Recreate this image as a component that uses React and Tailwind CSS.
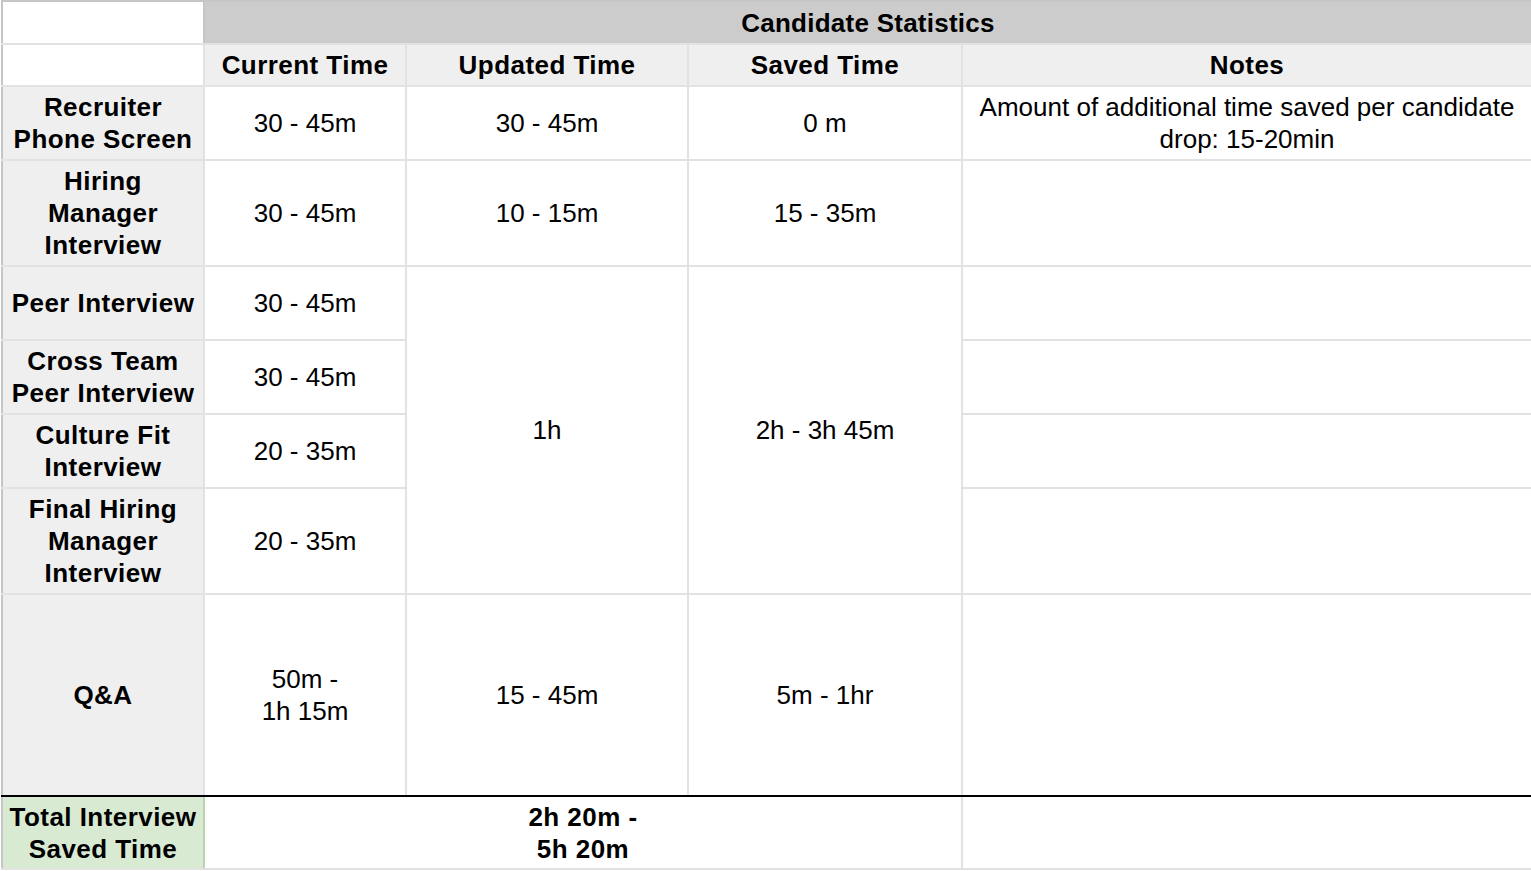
import React from "react";

const rows = [
  { label: ["Recruiter", "Phone Screen"], current: ["30 - 45m"], h: "h-[74px]" },
  { label: ["Hiring", "Manager", "Interview"], current: ["30 - 45m"], h: "h-[106px]" },
  { label: ["Peer Interview"], current: ["30 - 45m"], h: "h-[74px]" },
  { label: ["Cross Team", "Peer Interview"], current: ["30 - 45m"], h: "h-[74px]" },
  { label: ["Culture Fit", "Interview"], current: ["20 - 35m"], h: "h-[74px]" },
  { label: ["Final Hiring", "Manager", "Interview"], current: ["20 - 35m"], h: "h-[106px]" },
];

const cell = "border-2 border-[#e2e2e2] text-center align-middle p-0";
const bold = "font-bold tracking-[0.45px]";
const label = `border-2 border-[#e2e2e2] border-l-[#c6c6c6] bg-[#efefef] text-center align-middle p-0 ${bold}`;

function Lines({ lines }) {
  return lines.map((l, i) => <div key={i}>{l}</div>);
}

export default function App() {
  return (
    <div className="w-[1531px] h-[871px] bg-white overflow-hidden font-['Liberation_Sans',Arial,sans-serif] text-[26px] leading-[32px] text-black">
      <table className="table-fixed border-collapse w-[1530px] ml-px">
        <colgroup>
          <col className="w-[202px]" />
          <col className="w-[202px]" />
          <col className="w-[282px]" />
          <col className="w-[274px]" />
          <col className="w-[570px]" />
        </colgroup>
        <tbody>
          <tr className="h-[43px]">
            <td className="border-2 border-[#e2e2e2] border-t-[#c6c6c6] border-l-[#c6c6c6] border-r-[#c6c6c6] bg-white p-0"></td>
            <td colSpan={4} className={`border-2 border-[#e2e2e2] border-t-[#c6c6c6] border-r-[#c6c6c6] bg-[#cccccc] text-center p-0 font-bold tracking-[0.25px]`}>
              Candidate Statistics
            </td>
          </tr>
          <tr className="h-[42px]">
            <td className="border-2 border-[#e2e2e2] border-l-[#c6c6c6] bg-white p-0"></td>
            <td className={`${cell} bg-[#efefef] ${bold}`}>Current Time</td>
            <td className={`${cell} bg-[#efefef] ${bold}`}>Updated Time</td>
            <td className={`${cell} bg-[#efefef] ${bold}`}>Saved Time</td>
            <td className={`${cell} bg-[#efefef] ${bold}`}>Notes</td>
          </tr>
          {rows.map((r, i) => (
            <tr key={i} className={r.h}>
              <td className={label}>
                <Lines lines={r.label} />
              </td>
              <td className={cell}>
                <Lines lines={r.current} />
              </td>
              {i === 0 && (
                <>
                  <td className={cell}>30 - 45m</td>
                  <td className={cell}>0 m</td>
                  <td className={cell}>
                    <div>Amount of additional time saved per candidate</div>
                    <div>drop: 15-20min</div>
                  </td>
                </>
              )}
              {i === 1 && (
                <>
                  <td className={cell}>10 - 15m</td>
                  <td className={cell}>15 - 35m</td>
                  <td className={cell}></td>
                </>
              )}
              {i === 2 && (
                <>
                  <td rowSpan={4} className={cell}>1h</td>
                  <td rowSpan={4} className={cell}>2h - 3h 45m</td>
                  <td className={cell}></td>
                </>
              )}
              {i > 2 && <td className={cell}></td>}
            </tr>
          ))}
          <tr className="h-[202px]">
            <td className={`${label} border-b-black`}>Q&amp;A</td>
            <td className={`${cell} border-b-black`}>
              <div>50m -</div>
              <div>1h 15m</div>
            </td>
            <td className={`${cell} border-b-black`}>15 - 45m</td>
            <td className={`${cell} border-b-black`}>5m - 1hr</td>
            <td className={`${cell} border-b-black`}></td>
          </tr>
          <tr className="h-[73px]">
            <td className={`border-2 border-[#e2e2e2] border-l-[#c6c6c6] border-r-[#b9d4ae] bg-[#d9ead3] text-center align-middle p-0 ${bold}`}>
              <div>Total Interview</div>
              <div>Saved Time</div>
            </td>
            <td colSpan={3} className={`${cell} ${bold}`}>
              <div>2h 20m -</div>
              <div>5h 20m</div>
            </td>
            <td className={cell}></td>
          </tr>
        </tbody>
      </table>
    </div>
  );
}
